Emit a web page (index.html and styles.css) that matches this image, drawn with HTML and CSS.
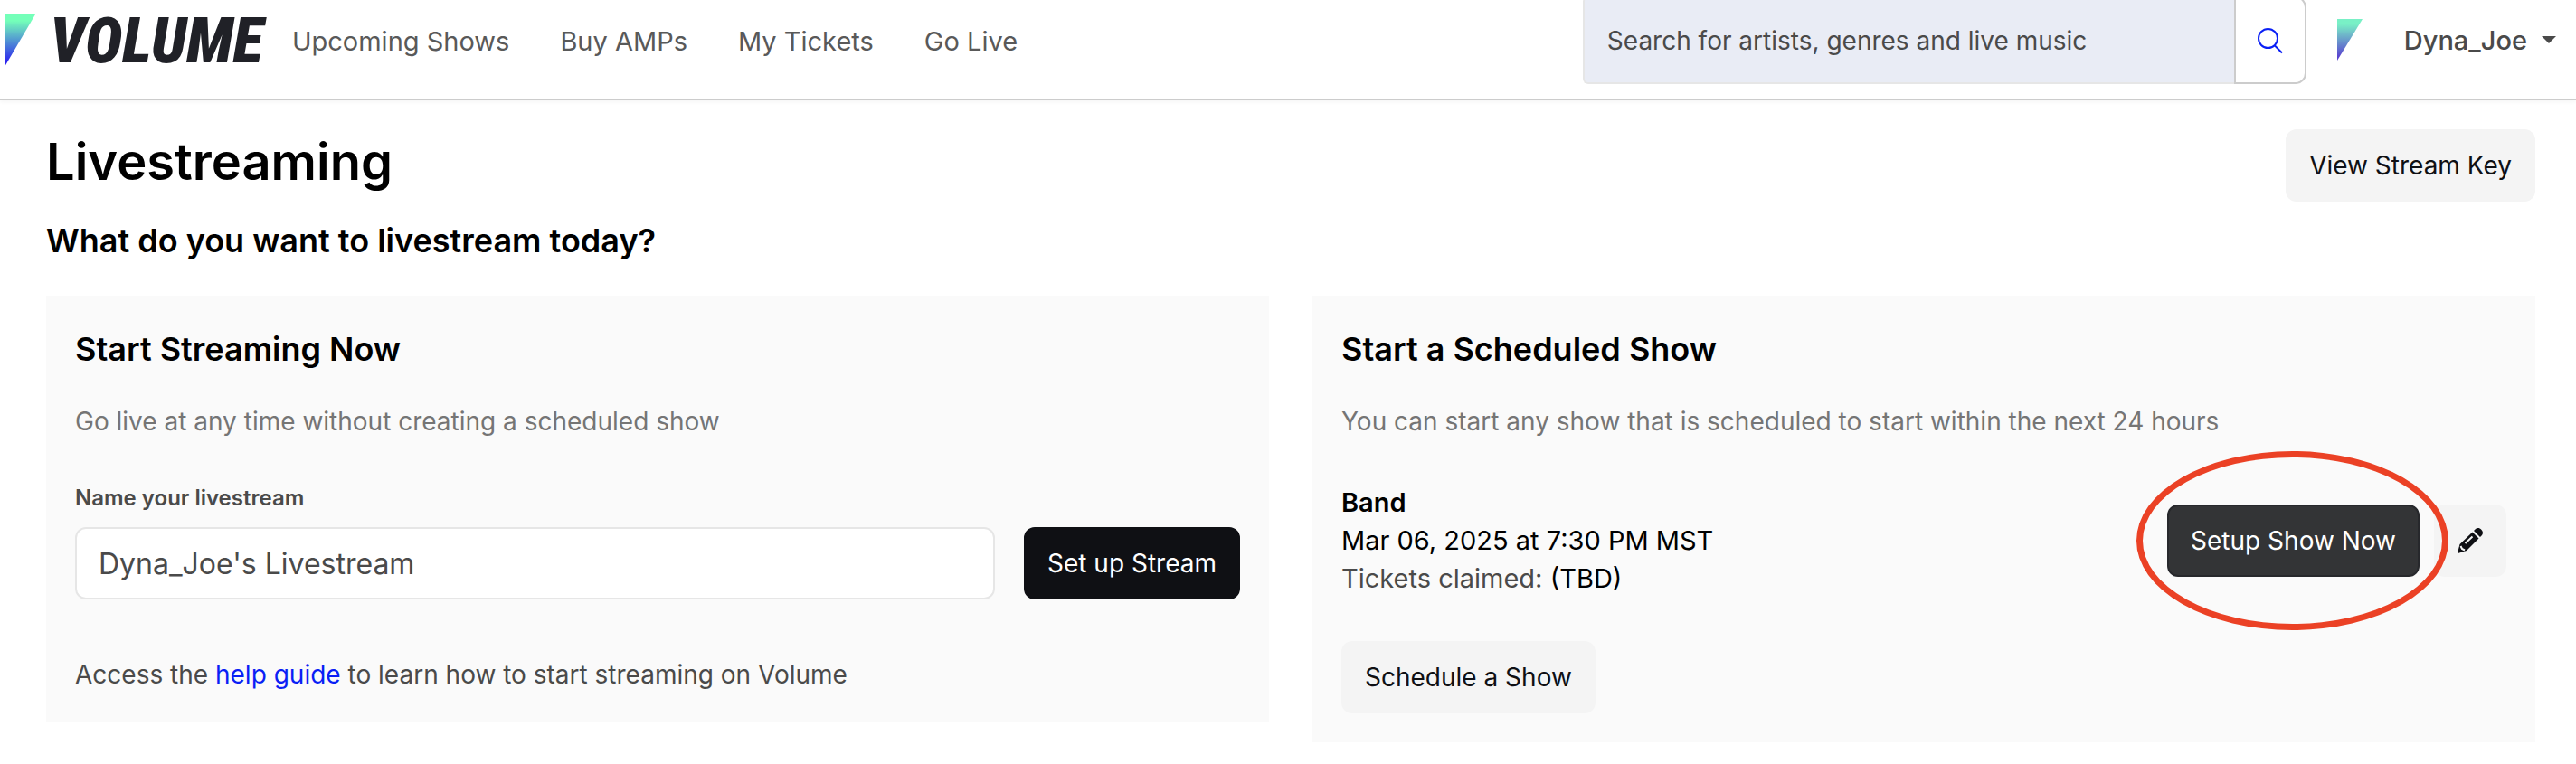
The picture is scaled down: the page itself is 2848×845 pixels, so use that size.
FILE: index.html
```html
<!DOCTYPE html>
<html lang="en">
<head>
    <meta charset="UTF-8">
    <meta name="viewport" content="width=device-width, initial-scale=1.0">
    <title>Livestreaming | Volume</title>
    <link rel="stylesheet" href="styles.css">
</head>
<body>

    <header class="topbar">
        <a href="#" class="logo">
            <svg class="logo-mark" viewBox="0 0 34 58" aria-hidden="true">
                <defs>
                    <linearGradient id="markFill" x1="0" y1="0" x2="0" y2="1">
                        <stop offset="0.12" stop-color="#74ffb9"/>
                        <stop offset="0.9" stop-color="#2c24ee"/>
                    </linearGradient>
                </defs>
                <path d="M0 0H34L0 58Z" fill="url(#markFill)"/>
            </svg>
            <span class="logo-text">VOLUME</span>
        </a>

        <nav class="main-nav">
            <a href="#">Upcoming Shows</a>
            <a href="#">Buy AMPs</a>
            <a href="#">My Tickets</a>
            <a href="#">Go Live</a>
        </nav>

        <form class="search">
            <input type="text" class="search-input" placeholder="Search for artists, genres and live music" aria-label="Search for artists, genres and live music">
            <button type="submit" class="search-btn" aria-label="Search">
                <svg viewBox="0 0 28 28" aria-hidden="true">
                    <circle cx="11.5" cy="11.5" r="10.5"/>
                    <path d="M18.5 19L27 27.5"/>
                </svg>
            </button>
        </form>

        <button type="button" class="user-menu">
            <svg class="avatar" viewBox="0 0 28 46" aria-hidden="true">
                <defs>
                    <linearGradient id="avatarFill" x1="0" y1="0" x2="0" y2="1">
                        <stop offset="0.12" stop-color="#79f0c6"/>
                        <stop offset="0.9" stop-color="#5a45d0"/>
                    </linearGradient>
                </defs>
                <path d="M0 0H28L0 46Z" fill="url(#avatarFill)"/>
            </svg>
            <span>Dyna_Joe</span>
            <span class="caret"></span>
        </button>
    </header>

    <main class="page">
        <div class="page-head">
            <h1>Livestreaming</h1>
            <button type="button" class="btn btn-light">View Stream Key</button>
        </div>
        <h2 class="question">What do you want to livestream today?</h2>

        <div class="cards">
            <section class="card">
                <h2>Start Streaming Now</h2>
                <p class="hint">Go live at any time without creating a scheduled show</p>
                <form class="stream-form">
                    <label for="streamName">Name your livestream</label>
                    <div class="stream-row">
                        <input type="text" id="streamName" value="Dyna_Joe's Livestream">
                        <button type="submit" class="btn btn-dark">Set up Stream</button>
                    </div>
                </form>
                <p class="help">Access the <a href="#">help guide</a> to learn how to start streaming on Volume</p>
            </section>

            <section class="card">
                <h2>Start a Scheduled Show</h2>
                <p class="hint">You can start any show that is scheduled to start within the next 24 hours</p>
                <div class="show">
                    <div class="show-info">
                        <p class="show-name">Band</p>
                        <p>Mar 06, 2025 at 7:30 PM MST</p>
                        <p><span class="muted">Tickets claimed:</span> (TBD)</p>
                    </div>
                    <div class="show-actions">
                        <div class="circled">
                            <button type="button" class="btn btn-dark btn-active">Setup Show Now</button>
                        </div>
                        <button type="button" class="btn btn-light btn-edit" aria-label="Edit show">
                            <svg viewBox="0 0 28 28" aria-hidden="true">
                                <path d="M16.5 4.5L23.5 11.5L10 25L0.5 28L0 27.5L2.5 18Z"/>
                                <path d="M18 3L20 1C22 -0.5 24.5 -0.2 26.3 1.7C28.2 3.5 28.5 6 27 8L25 10Z"/>
                                <path d="M8.5 17L16.5 9.5M3.5 20L5 23L8 24.5" class="shine"/>
                            </svg>
                        </button>
                    </div>
                </div>
                <button type="button" class="btn btn-light">Schedule a Show</button>
            </section>
        </div>
    </main>

</body>
</html>
```
FILE: styles.css
```css
* {
    box-sizing: border-box;
}

body {
    margin: 0;
    font-family: Inter, "Liberation Sans", sans-serif;
    font-size: 28px;
    line-height: 42px;
    color: #000;
    background-color: #fff;
    overflow: hidden;
}

h1, h2, p {
    margin: 0;
}

a {
    text-decoration: none;
}

button, input {
    font-family: inherit;
    font-size: 28px;
}

/* Top bar, pulled up a little so the search box touches the window edge */
.topbar {
    display: flex;
    align-items: flex-start;
    margin-top: -4px;
    padding-right: 22px;
    height: 115px;
    border-bottom: 2px solid #ccc;
    box-shadow: 0 2px 4px rgba(0, 0, 0, 0.04);
}

.logo {
    display: flex;
    align-items: center;
    gap: 16px;
    height: 98px;
    padding-left: 5px;
    color: #202127;
}

.logo-mark {
    width: 34px;
    height: 58px;
}

.logo-text {
    font-family: "Roboto Condensed", "Open Sans Condensed", "Noto Sans Condensed", Roboto, sans-serif;
    font-size: 70px;
    font-weight: 900;
    font-style: italic;
    line-height: 98px;
}

.main-nav {
    display: flex;
    gap: 56px;
    margin-left: 32px;
    font-size: 29px;
    line-height: 100px;
}

.main-nav a {
    color: #595959;
}

.search {
    display: flex;
    width: 800px;
    height: 97px;
    margin-left: auto;
}

.search-input {
    flex: 1;
    padding: 0 25px;
    border: 2px solid #e6e6e6;
    border-right: none;
    border-radius: 6px 0 0 6px;
    background-color: #e9ecf5;
    color: #4a4a4a;
}

.search-input::placeholder {
    color: #4a4a4a;
    opacity: 1;
}

.search-btn {
    width: 80px;
    padding: 0;
    border: 2px solid #ccc;
    border-radius: 0 12px 12px 0;
    background-color: #fff;
    cursor: pointer;
}

.search-btn svg {
    display: block;
    width: 28px;
    height: 28px;
    margin: 0 auto;
    fill: none;
    stroke: #0a1ff5;
    stroke-width: 2;
    overflow: visible;
}

.user-menu {
    display: flex;
    align-items: center;
    height: 96px;
    margin-left: 34px;
    padding: 0;
    border: none;
    background: none;
    font-size: 29px;
    font-weight: 500;
    color: #4a4a4a;
    cursor: pointer;
}

.avatar {
    width: 28px;
    height: 46px;
    margin-right: 46px;
}

.caret {
    margin-left: 16px;
    border: 8px solid transparent;
    border-top-color: #4a4a4a;
    border-bottom: none;
}

/* Page */
.page {
    padding: 32px 45px 24px 51px;
}

.page-head {
    display: flex;
    justify-content: space-between;
    align-items: flex-start;
}

h1 {
    font-size: 56px;
    font-weight: 600;
    line-height: 72px;
}

h2 {
    font-size: 36px;
    font-weight: 600;
    line-height: 54px;
}

.question {
    margin: 16px 0 34px;
}

.cards {
    display: grid;
    grid-template-columns: 1fr 1fr;
    align-items: start;
    gap: 48px;
}

.card {
    padding: 32px;
    background-color: #fafafa;
}

.hint {
    margin-top: 32px;
    color: #757575;
}

/* Buttons */
.btn {
    height: 80px;
    padding: 0 24px;
    border: 2px solid transparent;
    border-radius: 12px;
    white-space: nowrap;
    cursor: pointer;
}

.btn-light {
    background-color: #f4f4f4;
    color: #0f1014;
}

.btn-dark {
    border-color: #0f1014;
    background-color: #0f1014;
    color: #fff;
}

.btn-active {
    border-color: #27282c;
    background-color: #333436;
}

/* Start streaming form */
.stream-form {
    margin-top: 48px;
}

.stream-form label {
    display: block;
    margin-bottom: 16px;
    font-size: 24px;
    font-weight: 600;
    line-height: 32px;
    color: #4a4a4a;
}

.stream-row {
    display: flex;
    gap: 32px;
}

.stream-row input {
    flex: 1;
    height: 80px;
    padding: 0 24px;
    border: 2px solid #e6e6e6;
    border-radius: 12px;
    background-color: #fff;
    font-size: 32px;
    color: #4a4a4a;
}

.help {
    margin-top: 62px;
    color: #4a4a4a;
}

.help a {
    color: #0a1ff5;
}

/* Scheduled show */
.show {
    display: flex;
    justify-content: space-between;
    align-items: center;
    margin: 48px 0;
}

.show-info {
    font-size: 29px;
}

.show-name {
    font-weight: 600;
}

.muted {
    color: #4a4a4a;
}

.show-actions {
    display: flex;
    gap: 16px;
}

.circled {
    position: relative;
}

/* Red ring round the setup button */
.circled::after {
    content: "";
    position: absolute;
    inset: -59px -32px -59px -34px;
    border: 7px solid #eb4125;
    border-radius: 50%;
    pointer-events: none;
}

.btn-edit svg {
    display: block;
    width: 28px;
    height: 28px;
    fill: #0f1014;
    overflow: visible;
}

.btn-edit .shine {
    fill: none;
    stroke: #f4f4f4;
    stroke-width: 2;
}
```
